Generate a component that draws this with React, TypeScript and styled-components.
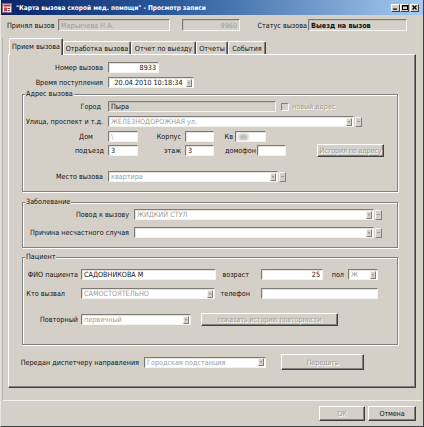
import React from "react";
import styled, { createGlobalStyle } from "styled-components";

const FONT = `"DejaVu Sans Condensed", "Liberation Sans", Arial, sans-serif`;

const Global = createGlobalStyle`
  html, body { margin: 0; padding: 0; background: #d4d0c8; }
  body { font-family: ${FONT}; font-size: 7.2px; }
`;

const Window = styled.div`
  width: 424px;
  height: 427px;
  box-sizing: border-box;
  background: #d4d0c8;
  display: flex;
  flex-direction: column;
  border-right: 1px solid #404040;
  border-bottom: 1px solid #404040;
  border-left: 1px solid #e8e6e0;
  overflow: hidden;
  font-family: ${FONT};
  font-stretch: condensed;
  font-size: 7.2px;
  color: #111;
`;

const TitleBar = styled.div`
  height: 15px;
  flex: none;
  display: flex;
  align-items: center;
  padding: 0 4px 0 1px;
  background: linear-gradient(to right, #0a246a 0%, #2a5a9a 40%, #a6caf0 100%);
  color: #fff;
  font-weight: bold;
  font-size: 6.5px;
  white-space: nowrap;
`;

const TitleText = styled.span`
  margin-left: 4px;
  flex: 1;
`;

const TitleButtons = styled.div`
  display: flex;
  align-items: center;
`;

const TitleBtn = styled.div<{ $gap?: number }>`
  width: 9px;
  height: 8px;
  margin-left: ${(p) => p.$gap ?? 0}px;
  box-sizing: border-box;
  background: #d4d0c8;
  border: 1px solid;
  border-color: #fff #404040 #404040 #fff;
  display: flex;
  align-items: center;
  justify-content: center;
`;

const HeaderRow = styled.div`
  display: flex;
  align-items: center;
  height: 12px;
  margin-top: 4px;
  padding-left: 6px;
  flex: none;
`;

const Frame = styled.div`
  margin: 7px 1px 0 1px;
  height: 362px;
  border-left: 1px solid #b8b4ac;
  border-bottom: 1px solid #f4f3ef;
  display: flex;
  flex-direction: column;
  flex: none;
`;

const TabStrip = styled.div`
  display: flex;
  align-items: flex-end;
  height: 16px;
  padding-left: 6px;
  flex: none;
`;

const Tab = styled.div<{ $w: number; $active?: boolean }>`
  box-sizing: border-box;
  width: ${(p) => p.$w}px;
  height: ${(p) => (p.$active ? 17 : 13)}px;
  margin-bottom: ${(p) => (p.$active ? -1 : 0)}px;
  position: relative;
  z-index: ${(p) => (p.$active ? 2 : 1)};
  background: #d4d0c8;
  border-top: 1px solid #fff;
  border-left: 1px solid #fff;
  border-right: 1px solid #404040;
  box-shadow: inset -1px 0 0 #808080;
  border-radius: 2px 2px 0 0;
  display: flex;
  align-items: center;
  justify-content: center;
  padding-bottom: ${(p) => (p.$active ? 2 : 0)}px;
  white-space: nowrap;
`;

const Panel = styled.div`
  box-sizing: border-box;
  margin-left: 5px;
  width: 408px;
  height: 334px;
  border-top: 1px solid #fff;
  border-left: 1px solid #fff;
  border-right: 1px solid #404040;
  border-bottom: 1px solid #404040;
  box-shadow: inset -1px -1px 0 #808080;
  display: flex;
  flex-direction: column;
  flex: none;
`;

const Group = styled.div<{ $mt: number; $h: number }>`
  position: relative;
  box-sizing: border-box;
  margin: ${(p) => p.$mt}px 0 0 13px;
  width: 376px;
  height: ${(p) => p.$h}px;
  border: 1px solid #808080;
  box-shadow: inset 1px 1px 0 #fff, 1px 1px 0 #fff;
  display: flex;
  flex-direction: column;
  flex: none;
`;

const Legend = styled.span`
  position: absolute;
  top: -6px;
  left: 2px;
  padding: 0 1px;
  line-height: 10px;
  background: #d4d0c8;
`;

const Row = styled.div<{ $mt: number; $h?: number }>`
  display: flex;
  align-items: center;
  height: ${(p) => p.$h ?? 11}px;
  margin-top: ${(p) => p.$mt}px;
  flex: none;
`;

const Label = styled.span<{ $w: number; $left?: boolean; $ml?: number; $muted?: boolean }>`
  width: ${(p) => p.$w}px;
  margin-left: ${(p) => p.$ml ?? 0}px;
  flex: none;
  text-align: ${(p) => (p.$left ? "left" : "right")};
  white-space: nowrap;
  color: ${(p) => (p.$muted ? "#a09c94" : "inherit")};
  text-shadow: ${(p) => (p.$muted ? "1px 1px 0 #fff" : "none")};
`;

const Field = styled.div<{
  $w?: number;
  $ml?: number;
  $h?: number;
  $off?: boolean;
  $grey?: boolean;
  $right?: boolean;
  $bold?: boolean;
}>`
  box-sizing: border-box;
  ${(p) => (p.$w ? `width: ${p.$w}px; flex: none;` : "flex: 1; min-width: 0;")}
  height: ${(p) => p.$h ?? 11}px;
  margin-left: ${(p) => p.$ml ?? 0}px;
  background: ${(p) => (p.$off ? "#d4d0c8" : "#fff")};
  border: 1px solid;
  border-color: #7c7a74 #f4f3ef #f4f3ef #7c7a74;
  box-shadow: inset 1px 1px 0 ${(p) => (p.$off ? "#c4c0b8" : "#e4e2dc")};
  display: flex;
  align-items: center;
  justify-content: ${(p) => (p.$right ? "flex-end" : "flex-start")};
  padding: 0 2px;
  overflow: hidden;
  white-space: nowrap;
  color: ${(p) => (p.$grey ? "#a09c94" : "#111")};
  font-weight: ${(p) => (p.$bold ? "bold" : "normal")};
`;

const Combo = styled.div<{ $w: number; $ml?: number }>`
  display: flex;
  align-items: center;
  gap: 1px;
  width: ${(p) => p.$w}px;
  margin-left: ${(p) => p.$ml ?? 0}px;
  flex: none;
`;

const ComboText = styled.span<{ $center?: boolean }>`
  flex: 1;
  overflow: hidden;
  text-align: ${(p) => (p.$center ? "center" : "left")};
`;

const DropBtn = styled.div`
  width: 6px;
  height: 8px;
  margin-right: -1px;
  box-sizing: border-box;
  flex: none;
  background: #d4d0c8;
  border: 1px solid;
  border-color: #f4f3ef #808080 #808080 #f4f3ef;
  display: flex;
  align-items: center;
  justify-content: center;
  &::after {
    content: "";
    border-left: 1.5px solid transparent;
    border-right: 1.5px solid transparent;
    border-top: 2px solid #8c8880;
  }
`;

const MoreBtn = styled.div`
  width: 7px;
  height: 10px;
  box-sizing: border-box;
  flex: none;
  background: #d4d0c8;
  border: 1px solid;
  border-color: #f4f3ef #808080 #808080 #f4f3ef;
  display: flex;
  align-items: center;
  justify-content: center;
  &::after {
    content: "";
    width: 3px;
    height: 1px;
    background: #a09c94;
  }
`;

const CheckBox = styled.div<{ $ml: number }>`
  width: 8px;
  height: 8px;
  margin-left: ${(p) => p.$ml}px;
  box-sizing: border-box;
  flex: none;
  background: #d4d0c8;
  border: 1px solid;
  border-color: #808080 #fff #fff #808080;
`;

const Button = styled.div<{ $w: number; $h?: number; $ml?: number; $off?: boolean }>`
  box-sizing: border-box;
  width: ${(p) => p.$w}px;
  height: ${(p) => p.$h ?? 13}px;
  margin-left: ${(p) => p.$ml ?? 0}px;
  flex: none;
  background: #d4d0c8;
  border: 1px solid;
  border-color: #fff #404040 #404040 #fff;
  box-shadow: inset -1px -1px 0 #808080;
  display: flex;
  align-items: center;
  justify-content: center;
  white-space: nowrap;
  overflow: hidden;
  letter-spacing: -0.15px;
  color: ${(p) => (p.$off ? "#a09c94" : "#111")};
  text-shadow: ${(p) => (p.$off ? "1px 1px 0 #fff" : "none")};
`;

const Blur = styled.span`
  width: 9px;
  height: 6px;
  margin-left: 1px;
  background: #b8b8b8;
  filter: blur(1.5px);
  flex: none;
`;

const Footer = styled.div`
  display: flex;
  justify-content: flex-end;
  gap: 3px;
  padding-right: 7px;
  margin-top: 5px;
  flex: none;
`;

export default function App() {
  return (
    <>
      <Global />
      <Window>
        <TitleBar>
          <svg width="10" height="10" viewBox="0 0 10 10">
            <rect x="0.5" y="0.5" width="9" height="9" fill="#f4f0f0" stroke="#7a6a8a" />
            <rect x="1.5" y="1.5" width="7" height="2" fill="#c03030" />
            <rect x="2" y="4.5" width="3" height="4" fill="#d84040" />
            <rect x="5.5" y="5" width="2.5" height="1" fill="#604070" />
            <rect x="5.5" y="7" width="2.5" height="1" fill="#604070" />
          </svg>
          <TitleText>"Карта вызова скорой мед. помощи" - Просмотр записи</TitleText>
          <TitleButtons>
            <TitleBtn>
              <svg width="5" height="5" viewBox="0 0 5 5">
                <rect x="0" y="3.5" width="4" height="1.2" fill="#000" />
              </svg>
            </TitleBtn>
            <TitleBtn>
              <svg width="6" height="5" viewBox="0 0 6 5">
                <rect x="0.5" y="0.5" width="5" height="4" fill="none" stroke="#000" />
                <rect x="0.5" y="0.5" width="5" height="1" fill="#000" />
              </svg>
            </TitleBtn>
            <TitleBtn $gap={1}>
              <svg width="5" height="5" viewBox="0 0 5 5">
                <path d="M0.5 0.5 L4.5 4.5 M4.5 0.5 L0.5 4.5" stroke="#000" strokeWidth="1.2" />
              </svg>
            </TitleBtn>
          </TitleButtons>
        </TitleBar>

        <HeaderRow>
          <Label $w={45} $left>Принял вызов</Label>
          <Field $w={112} $ml={6} $h={12} $off $grey>Марьичева Н.А.</Field>
          <Field $w={58} $ml={12} $h={12} $off $grey $right>9960</Field>
          <Label $w={50} $ml={17}>Статус вызова</Label>
          <Field $w={99} $ml={1} $h={12} $off $bold>Выезд на вызов</Field>
        </HeaderRow>

        <Frame>
          <TabStrip>
            <Tab $w={54} $active>Прием вызова</Tab>
            <Tab $w={68}>Отработка вызова</Tab>
            <Tab $w={65}>Отчет по выезду</Tab>
            <Tab $w={32}>Отчеты</Tab>
            <Tab $w={38}>События</Tab>
          </TabStrip>

          <Panel>
            <Row $mt={7}>
              <Label $w={94}>Номер вызова</Label>
              <Field $w={51} $ml={5} $right>8933</Field>
            </Row>
            <Row $mt={4}>
              <Label $w={94}>Время поступления</Label>
              <Combo $w={86} $ml={5}>
                <Field>
                  <ComboText $center>20.04.2010 10:18:34</ComboText>
                  <DropBtn />
                </Field>
              </Combo>
            </Row>

            <Group $mt={6} $h={98}>
              <Legend>Адрес вызова</Legend>
              <Row $mt={6}>
                <Label $w={78}>Город</Label>
                <Field $w={168} $ml={7} $off>Пыра</Field>
                <CheckBox $ml={5} />
                <Label $w={60} $ml={3} $left $muted>новый адрес</Label>
              </Row>
              <Row $mt={4}>
                <Label $w={80}>Улица, проспект и т.д.</Label>
                <Combo $w={254} $ml={5}>
                  <Field $grey>
                    <ComboText>ЖЕЛЕЗНОДОРОЖНАЯ ул.</ComboText>
                    <DropBtn />
                  </Field>
                  <MoreBtn />
                </Combo>
              </Row>
              <Row $mt={4}>
                <Label $w={70}>Дом</Label>
                <Field $w={30} $ml={15} $grey>\</Field>
                <Label $w={43}>Корпус</Label>
                <Field $w={29} $ml={4} />
                <Label $w={19}>Кв</Label>
                <Field $w={31} $ml={2}>
                  <Blur />
                </Field>
              </Row>
              <Row $mt={2} $h={13}>
                <Label $w={81}>подъезд</Label>
                <Field $w={30} $ml={4}>3</Field>
                <Label $w={43}>этаж</Label>
                <Field $w={29} $ml={4}>3</Field>
                <Label $w={42}>домофон</Label>
                <Field $w={29} $ml={1} />
                <Button $w={67} $ml={31} $off>История по адресу</Button>
              </Row>
              <Row $mt={14}>
                <Label $w={80}>Место вызова</Label>
                <Combo $w={178} $ml={5}>
                  <Field $grey>
                    <ComboText>квартира</ComboText>
                    <DropBtn />
                  </Field>
                  <MoreBtn />
                </Combo>
              </Row>
            </Group>

            <Group $mt={10} $h={46}>
              <Legend>Заболевание</Legend>
              <Row $mt={6}>
                <Label $w={106}>Повод к вызову</Label>
                <Combo $w={248} $ml={5}>
                  <Field $grey>
                    <ComboText>ЖИДКИЙ СТУЛ</ComboText>
                    <DropBtn />
                  </Field>
                  <MoreBtn />
                </Combo>
              </Row>
              <Row $mt={7}>
                <Label $w={106}>Причина несчастного случая</Label>
                <Combo $w={248} $ml={5}>
                  <Field $grey>
                    <ComboText />
                    <DropBtn />
                  </Field>
                  <MoreBtn />
                </Combo>
              </Row>
            </Group>

            <Group $mt={9} $h={88}>
              <Legend>Пациент</Legend>
              <Row $mt={11}>
                <Label $w={55}>ФИО пациента</Label>
                <Field $w={135} $ml={3}>САДОВНИКОВА М</Field>
                <Label $w={33}>возраст</Label>
                <Field $w={62} $ml={12} $right>25</Field>
                <Label $w={21}>пол</Label>
                <Combo $w={30} $ml={4}>
                  <Field $grey>
                    <ComboText>Ж</ComboText>
                    <DropBtn />
                  </Field>
                </Combo>
              </Row>
              <Row $mt={8}>
                <Label $w={42}>Кто вызвал</Label>
                <Combo $w={134} $ml={16}>
                  <Field $grey>
                    <ComboText>САМОСТОЯТЕЛЬНО</ComboText>
                    <DropBtn />
                  </Field>
                </Combo>
                <Label $w={35}>телефон</Label>
                <Field $w={117} $ml={11} />
              </Row>
              <Row $mt={14} $h={13}>
                <Label $w={55}>Повторный</Label>
                <Combo $w={110} $ml={3}>
                  <Field $grey>
                    <ComboText>первичный</ComboText>
                    <DropBtn />
                  </Field>
                </Combo>
                <Button $w={137} $ml={10} $off>показать историю повторности</Button>
              </Row>
            </Group>

            <Row $mt={9} $h={16}>
              <Label $w={130}>Передан диспетчеру направления</Label>
              <Combo $w={122} $ml={5}>
                <Field $grey>
                  <ComboText>Городская подстанция</ComboText>
                  <DropBtn />
                </Field>
              </Combo>
              <Button $w={83} $h={16} $ml={15} $off>Передать</Button>
            </Row>
          </Panel>
        </Frame>

        <Footer>
          <Button $w={46} $h={15} $off>ОК</Button>
          <Button $w={48} $h={15}>Отмена</Button>
        </Footer>
      </Window>
    </>
  );
}
